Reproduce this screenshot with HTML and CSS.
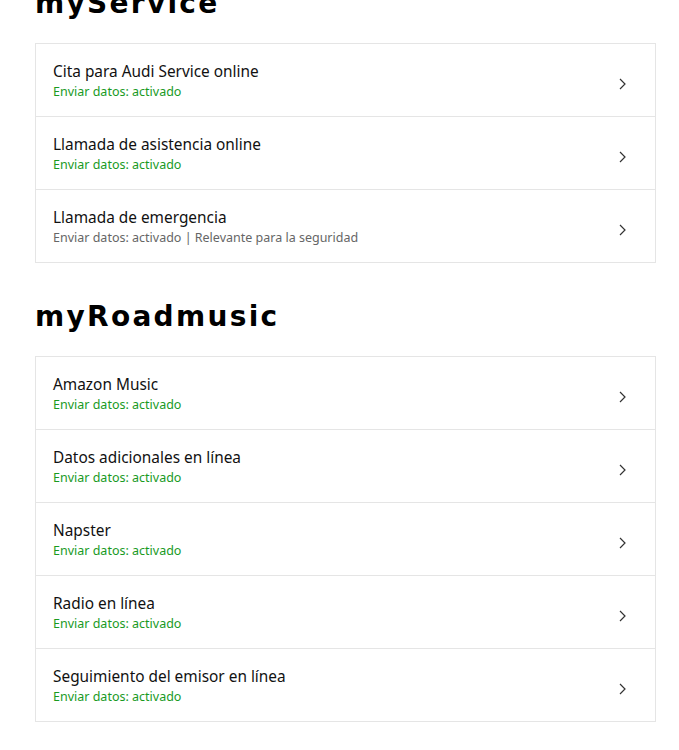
FILE: index.html
```
<!DOCTYPE html>
<html lang="es">
<head>
<meta charset="utf-8">
<link rel="stylesheet" href="styles.css">
</head>
<body>
<main class="page">
  <section class="section section-first">
    <h2 class="heading">myService</h2>
    <ul class="list">
      <li class="item"><div class="texts"><div class="title">Cita para Audi Service online</div><div class="sub sub-on">Enviar datos: activado</div></div><svg class="chev" viewBox="0 0 7 12" width="7" height="12"><path d="M1 1l5 5-5 5" fill="none" stroke="#333" stroke-width="1.2"/></svg></li>
      <li class="item"><div class="texts"><div class="title">Llamada de asistencia online</div><div class="sub sub-on">Enviar datos: activado</div></div><svg class="chev" viewBox="0 0 7 12" width="7" height="12"><path d="M1 1l5 5-5 5" fill="none" stroke="#333" stroke-width="1.2"/></svg></li>
      <li class="item"><div class="texts"><div class="title">Llamada de emergencia</div><div class="sub sub-gray">Enviar datos: activado | Relevante para la seguridad</div></div><svg class="chev" viewBox="0 0 7 12" width="7" height="12"><path d="M1 1l5 5-5 5" fill="none" stroke="#333" stroke-width="1.2"/></svg></li>
    </ul>
  </section>
  <section class="section">
    <h2 class="heading">myRoadmusic</h2>
    <ul class="list">
      <li class="item"><div class="texts"><div class="title">Amazon Music</div><div class="sub sub-on">Enviar datos: activado</div></div><svg class="chev" viewBox="0 0 7 12" width="7" height="12"><path d="M1 1l5 5-5 5" fill="none" stroke="#333" stroke-width="1.2"/></svg></li>
      <li class="item"><div class="texts"><div class="title">Datos adicionales en línea</div><div class="sub sub-on">Enviar datos: activado</div></div><svg class="chev" viewBox="0 0 7 12" width="7" height="12"><path d="M1 1l5 5-5 5" fill="none" stroke="#333" stroke-width="1.2"/></svg></li>
      <li class="item"><div class="texts"><div class="title">Napster</div><div class="sub sub-on">Enviar datos: activado</div></div><svg class="chev" viewBox="0 0 7 12" width="7" height="12"><path d="M1 1l5 5-5 5" fill="none" stroke="#333" stroke-width="1.2"/></svg></li>
      <li class="item"><div class="texts"><div class="title">Radio en línea</div><div class="sub sub-on">Enviar datos: activado</div></div><svg class="chev" viewBox="0 0 7 12" width="7" height="12"><path d="M1 1l5 5-5 5" fill="none" stroke="#333" stroke-width="1.2"/></svg></li>
      <li class="item"><div class="texts"><div class="title">Seguimiento del emisor en línea</div><div class="sub sub-on">Enviar datos: activado</div></div><svg class="chev" viewBox="0 0 7 12" width="7" height="12"><path d="M1 1l5 5-5 5" fill="none" stroke="#333" stroke-width="1.2"/></svg></li>
    </ul>
  </section>
</main>
</body>
</html>
```
FILE: styles.css
```
html, body {
  margin: 0;
  padding: 0;
  background: #fff;
}
.page {
  padding: 0 23px 0 35px;
  margin-top: -16px;
}
.section {
  margin-bottom: 34px;
}
.heading {
  font-family: "DejaVu Sans", sans-serif;
  font-weight: bold;
  font-size: 28px;
  letter-spacing: 2.3px;
  line-height: 40px;
  margin: 0 0 19px 0;
  color: #000;
}
.list {
  list-style: none;
  margin: 0;
  padding: 0;
  border: 1px solid #e5e5e5;
}
.item {
  display: flex;
  align-items: center;
  height: 72px;
  padding: 0 29px 0 17px;
  border-top: 1px solid #e5e5e5;
}
.item:first-child {
  border-top: none;
}
.texts {
  flex: 1;
  padding-top: 2px;
}
.title {
  font-family: "Noto Sans", sans-serif;
  font-size: 15.4px;
  line-height: 20px;
  color: #111;
}
.sub {
  font-family: "Noto Sans", sans-serif;
  font-size: 12.5px;
  line-height: 18px;
  margin-top: 1px;
}
.sub-on {
  color: #1a9a1f;
}
.sub-gray {
  color: #666;
}
.chev {
  display: block;
  margin-top: 8px;
}
```
